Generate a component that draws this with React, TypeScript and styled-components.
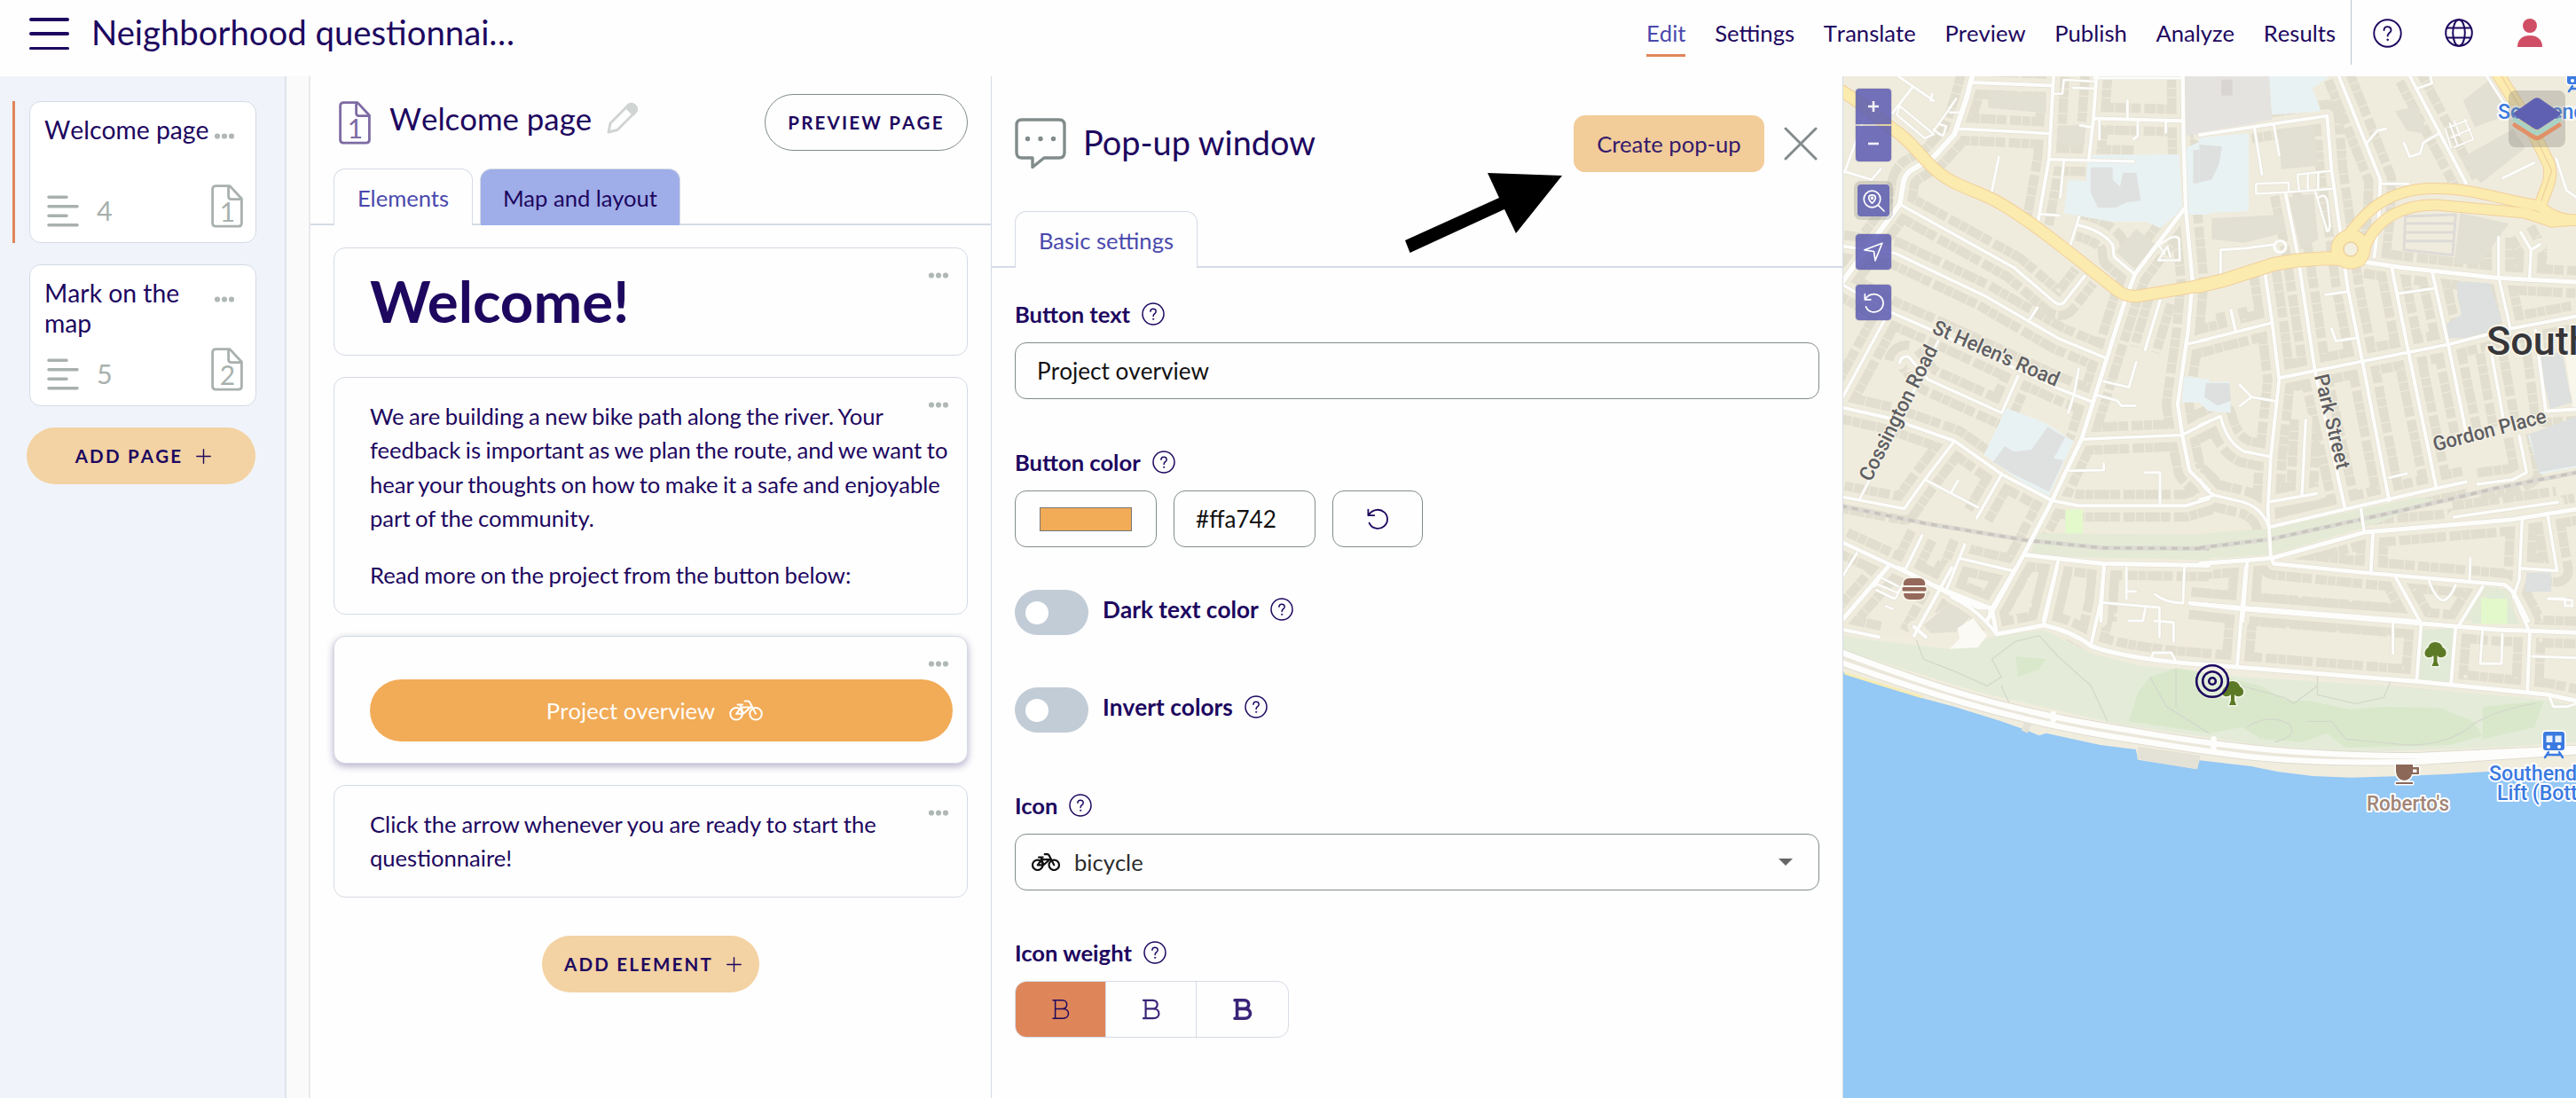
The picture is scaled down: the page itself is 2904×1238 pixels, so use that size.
import React from "react";
import styled, { createGlobalStyle, css } from "styled-components";

const ink = "#1d075f";
const line = "#d5dbe5";
const grey = "#a9b1ae";
const sand = "#f3d2a3";

const Global = createGlobalStyle`
  * { box-sizing: border-box; }
  body { margin: 0; background: #fefefe; color: ${ink}; font-family: Lato, "Liberation Sans", sans-serif; font-size: 25.6px; }
  svg { display: block; flex: none; }
`;

/* ---------- page frame ---------- */

const Page = styled.div`
  width: 2904px;
  height: 1238px;
  overflow: hidden;
  display: flex;
  flex-direction: column;
`;
const Header = styled.header`
  height: 86px;
  flex: none;
  display: flex;
  align-items: flex-start;
  background: #fefefe;
`;
const Burger = styled.div`
  width: 45px;
  height: 36px;
  margin: 20px 0 0 33px;
  display: flex;
  flex-direction: column;
  justify-content: space-between;
  i { height: 3.5px; border-radius: 2px; background: ${ink}; }
`;
const Title = styled.h1`
  margin: 12px 0 0 25px;
  width: 500px;
  font-size: 38.3px;
  line-height: 48px;
  font-weight: 400;
  white-space: nowrap;
`;
const Nav = styled.nav`
  margin-left: auto;
  height: 73px;
  padding-right: 17px;
  border-right: 1px solid #b9c9d3;
  display: flex;
  gap: 32.7px;
  font-kerning: none;
`;
const NavItem = styled.a<{ $active?: boolean }>`
  height: 64px;
  padding-top: 21px;
  line-height: 32px;
  color: ${(p) => (p.$active ? "#4a49ad" : ink)};
  border-bottom: 3px solid ${(p) => (p.$active ? "#e08559" : "transparent")};
`;
const HeaderIcons = styled.div`
  width: 253px;
  height: 74px;
  padding-left: 24px;
  display: flex;
  align-items: center;
  gap: 48px;
`;
const Body = styled.div`
  flex: 1;
  display: flex;
  min-height: 0;
`;

/* ---------- sidebar ---------- */

const Sidebar = styled.aside`
  width: 323px;
  flex: none;
  padding: 28px 33px 0 14px;
  border-right: 2px solid #e0e4ea;
  background: #f0f4fa;
  display: flex;
  flex-direction: column;
  gap: 24px;
`;
const PageSlot = styled.div<{ $current?: boolean }>`
  height: 160px;
  padding-left: 16px;
  border-left: 3px solid ${(p) => (p.$current ? "#e08559" : "transparent")};
`;
const PageCard = styled.div`
  width: 256px;
  height: 160px;
  padding: 14px 14px 16px 16px;
  border: 1.5px solid ${line};
  border-radius: 13px;
  background: #fff;
  display: flex;
  flex-direction: column;
  justify-content: space-between;
`;
const PageTop = styled.div`
  display: flex;
  justify-content: space-between;
  padding-right: 9px;
  font-size: 28.3px;
  font-kerning: none;
  line-height: 34px;
  svg { margin-top: 21px; }
`;
const PageName = styled.div<{ $wrap?: boolean }>`
  width: ${(p) => (p.$wrap ? "168px" : "190px")};
  white-space: ${(p) => (p.$wrap ? "normal" : "nowrap")};
`;
const PageBottom = styled.div`
  display: flex;
  align-items: center;
  height: 49px;
  padding-left: 3px;
  color: ${grey};
  font-size: 30.5px;
  span { margin: 8px auto 0 20px; line-height: 36px; }
  & > svg:first-child { margin-top: 10px; }
`;
const pill = css`
  height: 64px;
  border-radius: 32px;
  background: ${sand};
  display: flex;
  align-items: center;
  justify-content: center;
  font-size: 20.5px;
  font-weight: 700;
  letter-spacing: 2.2px;
  font-kerning: none;
  white-space: nowrap;
`;
const AddPage = styled.button`
  ${pill}
  width: 258px;
  margin-left: 16px;
  border: 0;
  padding: 0 0 0 5px;
  gap: 15px;
  color: ${ink};
  font-family: inherit;
`;
const Gutter = styled.div`
  width: 27px;
  flex: none;
  background: #fafafa;
  border-right: 2px solid #e8e9ed;
`;

/* ---------- element column ---------- */

const Editor = styled.section`
  width: 767px;
  flex: none;
  background: #fefefe;
`;
const EditorHead = styled.div`
  height: 104px;
  padding: 20px 26px 20px 32px;
  display: flex;
  align-items: center;
`;
const EditorTitle = styled.h2`
  margin: 0 17px 8px 21px;
  font-size: 34.8px;
  line-height: 44px;
  font-weight: 400;
  font-kerning: none;
  white-space: nowrap;
`;
const PreviewButton = styled.button`
  ${pill}
  width: 229px;
  margin-left: auto;
  padding: 0;
  border: 1.5px solid #828b8b;
  background: transparent;
  color: ${ink};
  font-family: inherit;
`;
const TabRow = styled.div`
  height: 64px;
  padding-left: 26px;
  display: flex;
  gap: 8px;
  box-shadow: inset 0 -2px 0 ${line};
`;
const Tab = styled.div<{ $active?: boolean; $w: number }>`
  width: ${(p) => p.$w}px;
  height: 64px;
  border: 1.5px solid ${line};
  border-bottom: 0;
  border-radius: 13px 13px 0 0;
  background: ${(p) => (p.$active ? "#fefefe" : "#9fade8")};
  color: ${(p) => (p.$active ? "#4a49ad" : ink)};
  display: flex;
  align-items: center;
  justify-content: center;
  white-space: nowrap;
`;
const Cards = styled.div`
  padding: 25px 26px 0;
  display: flex;
  flex-direction: column;
  gap: 24px;
`;
const Card = styled.article<{ $h: number; $selected?: boolean }>`
  position: relative;
  width: 715px;
  height: ${(p) => p.$h}px;
  padding: 24px 15px 0 40px;
  border: 1.5px solid ${line};
  border-radius: 13px;
  background: #fefefe;
  line-height: 38.4px;
  box-shadow: ${(p) => (p.$selected ? "0 3px 8px rgba(29,7,95,.32)" : "none")};
`;
const Copy = styled.p<{ $tight?: number }>`
  margin: 0 0 25.6px;
  white-space: nowrap;
  word-spacing: ${(p) => -(p.$tight ?? 1)}px;
`;
const CardMenu = styled.div`
  position: absolute;
  right: 20px;
  top: 27px;
`;
const Heading = styled.div`
  margin-top: -3px;
  font-size: 65.4px;
  line-height: 76px;
  font-weight: 700;
`;
const ProjectButton = styled.div`
  width: 657px;
  height: 70px;
  margin-top: 24px;
  border-radius: 35px;
  background: #f2ab57;
  color: #fffdf9;
  font-kerning: none;
  display: flex;
  align-items: center;
  justify-content: center;
  gap: 16px;
  padding-right: 15px;
`;
const AddElement = styled.button`
  ${pill}
  width: 245px;
  margin: 43px auto 0;
  border: 0;
  padding: 0 0 0 5px;
  gap: 15px;
  color: ${ink};
  font-family: inherit;
`;

/* ---------- settings column ---------- */

const Settings = styled.section`
  width: 961px;
  flex: none;
  border-left: 1.5px solid ${line};
  border-right: 1.5px solid ${line};
  background: #fefefe;
`;
const SettingsHead = styled.div`
  height: 152px;
  padding: 44px 28px 44px 26px;
  display: flex;
  align-items: center;
  h2 { margin: 0 auto 2px 19px; font-size: 37.9px; line-height: 48px; font-weight: 400; }
`;
const CreateButton = styled.div`
  width: 215px;
  height: 64px;
  margin-right: 22px;
  border-radius: 13px;
  background: #f2cc99;
  display: flex;
  align-items: center;
  justify-content: center;
  padding-bottom: 1px;
  color: #341a6b;
`;
const Form = styled.div`
  padding: 0 26px;
`;
const Label = styled.div<{ $top?: number }>`
  height: 32px;
  margin: ${(p) => p.$top ?? 0}px 0 16px;
  display: flex;
  align-items: center;
  gap: 13px;
  font-weight: 700;
  white-space: nowrap;
`;
const Box = styled.div<{ $w: number; $pad?: number }>`
  width: ${(p) => p.$w}px;
  height: 64px;
  padding: 0 ${(p) => p.$pad ?? 24}px;
  border: 1.5px solid #828b8b;
  border-radius: 13px;
  display: flex;
  align-items: center;
  color: #111;
  font-size: 26.1px;
  font-kerning: none;
`;
const ColorRow = styled.div`
  display: flex;
  gap: 19px;
`;
const Swatch = styled.div`
  width: 104px;
  height: 27px;
  background: #f2ab57;
  border: 1.5px solid #767676;
`;
const ToggleRow = styled.div<{ $top: number }>`
  height: 51px;
  margin-top: ${(p) => p.$top}px;
  display: flex;
  align-items: center;
  gap: 16px;
`;
const ToggleLabel = styled(Label)`
  margin: 0 0 7px;
  font-size: 26.2px;
  font-kerning: none;
`;
const Toggle = styled.div`
  width: 83px;
  height: 51px;
  padding-left: 12px;
  border-radius: 26px;
  background: #c2ccd7;
  display: flex;
  align-items: center;
  i { width: 26px; height: 26px; border-radius: 50%; background: #fff; }
`;
const OptionName = styled.span`
  margin-left: 16px;
  color: #2c2c2c;
  font-size: 25.6px;
`;
const Caret = styled.i`
  margin: 0 11px 0 auto;
  border: 8px solid transparent;
  border-top-color: #666;
  border-bottom: 0;
`;
const Weights = styled.div`
  width: 309px;
  height: 64px;
  border: 1.5px solid ${line};
  border-radius: 13px;
  overflow: hidden;
  display: grid;
  grid-template-columns: 102px 102px 1fr;
`;
const Weight = styled.div<{ $on?: boolean }>`
  display: flex;
  align-items: center;
  justify-content: center;
  border-right: 1px solid ${line};
  background: ${(p) => (p.$on ? "#de865a" : "transparent")};
  &:last-child { border-right: 0; }
`;

/* ---------- map ---------- */

const MapPane = styled.section`
  position: relative;
  flex: 1;
  overflow: hidden;
  background: #f0ecdd;
`;
const MapTools = styled.div`
  position: absolute;
  left: 14px;
  top: 14px;
  display: flex;
  flex-direction: column;
`;
const tool = css`
  width: 40px;
  display: flex;
  align-items: center;
  justify-content: center;
  background: rgba(88, 88, 176, 0.84);
  box-shadow: 0 0 0 1px rgba(60, 60, 100, 0.15);
`;
const Tool = styled.div<{ $gap?: number; $r?: string }>`
  ${tool}
  height: 40px;
  margin-bottom: ${(p) => p.$gap ?? 2}px;
  border-radius: ${(p) => p.$r ?? "4px"};
`;
const SearchTool = styled.div`
  ${tool}
  width: 36px;
  height: 36px;
  margin: 0 2px 20px;
  border-radius: 4px;
  background: #6f6fb6;
  box-shadow: 0 0 0 4px rgba(120, 120, 120, 0.25);
`;
const LayersButton = styled.div`
  position: absolute;
  right: 12px;
  top: 16px;
  width: 64px;
  height: 64px;
  border-radius: 8px;
  background: rgba(130, 130, 120, 0.33);
  display: flex;
  align-items: center;
  justify-content: center;
`;
const Arrow = styled.svg`
  position: absolute;
  left: 1580px;
  top: 190px;
  pointer-events: none;
`;

/* ---------- icons ---------- */

const Dots = () => (
  <svg width="24" height="7" viewBox="0 0 24 7" fill="#b0b8b5">
    <circle cx="4" cy="3.5" r="3.1" />
    <circle cx="12" cy="3.5" r="3.1" />
    <circle cx="20" cy="3.5" r="3.1" />
  </svg>
);

const DocIcon = ({ n, color }: { n: string; color: string }) => (
  <svg width="36" height="49" viewBox="0 0 36 49" fill="none" stroke={color} strokeWidth="2.8" strokeLinejoin="round">
    <path d="M5.5 1.6H21L34.4 16V43.5Q34.4 47.2 30.8 47.2H5.2Q1.6 47.2 1.6 43.5V5.2Q1.6 1.6 5.5 1.6Z" />
    <path d="M19.6 1.6V13.6Q19.6 16.6 22.6 16.6H34.4" />
    <text x="18.5" y="41.5" textAnchor="middle" fontSize="30" fontFamily="Lato" fill={color} stroke="none">{n}</text>
  </svg>
);

const ListIcon = () => (
  <svg width="36" height="36" viewBox="0 0 36 36" stroke={grey} strokeWidth="3.6" strokeLinecap="round">
    <path d="M2 2.2H22M2 12.7H34M2 23.2H22M2 33.7H34" />
  </svg>
);

const Plus = () => (
  <svg width="17" height="17" viewBox="0 0 17 17" stroke={ink} strokeWidth="1.4" strokeLinecap="round">
    <path d="M8.5 .8V16.2M.8 8.5H16.2" />
  </svg>
);

const Help = ({ size = 26 }: { size?: number }) => (
  <svg width={size} height={size} viewBox="0 0 26 26" fill="none" stroke={ink} strokeWidth="1.5" strokeLinecap="round">
    <circle cx="13" cy="13" r="12" />
    <path d="M9.9 10.3C9.9 6.1 16.2 6.2 16.2 10.2C16.2 12.7 13.1 12.7 13.1 15.4" />
    <circle cx="13.1" cy="18.8" r=".7" fill={ink} strokeWidth=".6" />
  </svg>
);

const Bike = ({ w, color, sw }: { w: number; color: string; sw: number }) => (
  <svg width={w} height={(w * 24) / 38} viewBox="0 0 38 24" fill="none" stroke={color} strokeWidth={sw} strokeLinecap="round" strokeLinejoin="round">
    <circle cx="8" cy="15.8" r="6.8" />
    <circle cx="30" cy="15.8" r="6.8" />
    <path d="M17.5 1.4H21.2Q22.6 1.4 23.2 2.8L30 15.8M9.6 5.4H15M12.4 5.6L15.6 14.6M13.4 8.4H25M8 15.8L13.4 8.6M8 15.8H16L24.6 8M14.3 15.8V18.2" />
  </svg>
);

const Undo = ({ size, color, sw }: { size: number; color: string; sw: number }) => (
  <svg width={size} height={size} viewBox="0 0 24 24" fill="none" stroke={color} strokeWidth={sw} strokeLinecap="round" strokeLinejoin="round">
    <path d="M1.4 1.6V8.2H8.2M1.8 8C5 1.6 14 -.4 19.6 4.6C24.4 9 24 16.4 19.4 20.2C14 24.8 5.4 23.4 2.6 16.6" />
  </svg>
);

const BoldIcon = ({ sw, color }: { sw: number; color: string }) => (
  <svg width="22" height="24" viewBox="0 0 22 24" fill="none" stroke={color} strokeWidth={sw} strokeLinecap="round" strokeLinejoin="round">
    <path d="M2 1.8H12.6C19.400 1.8 19.400 11.4 12.6 11.4H4.6M12.6 11.4H13.2C21.600 11.4 21.600 22.2 13.2 22.2H2M4.6 1.8V22.2" />
  </svg>
);

/* ---------- map drawing ---------- */

type Road = [string, number];

const westRoads: Road[] = [
  ["M460 15L440 80L400 180L330 245L250 285Q228 300 225 330L215 380L22 600", 6],
  ["M455 33L730 42", 4],
  ["M735 15L720 250L680 440", 4],
  ["M415 165L718 178", 3.5],
  ["M720 252L1005 258", 3.5],
  ["M880 15L870 135L855 250", 4],
  ["M870 135L1170 142", 4],
  ["M870 20L1172 20", 3],
  ["M1172 15L1175 210L1182 390L1205 600L1190 740L1155 950L1172 1045L1195 1140L1260 1195", 4.5],
  ["M1175 395L1010 580L975 660L915 820L830 1050L730 1225L640 1370L510 1568", 5],
  ["M1010 580L940 530L935 495Q900 455 820 440", 3.5],
  ["M822 415L785 515", 3],
  ["M215 380L600 560L740 660Q762 672 775 655L840 585", 3.5],
  ["M22 500L200 520L500 640L750 762L915 820", 3.5],
  ["M22 610L190 690L340 745L750 905L870 945", 3.5],
  ["M650 715L680 675", 3],
  ["M345 770L200 1020L80 1220", 3],
  ["M215 832Q220 812 245 815L310 880L560 975L615 870", 3.5],
  ["M22 960L180 990L400 1055L560 1150L730 1225L820 1240L1180 1240L1260 1220", 4],
  ["M400 1055L300 1165L230 1248L22 1215", 3.5],
  ["M300 1165L480 1245M390 1200L412 1168", 3],
  ["M560 1150L475 1275", 3.5],
  ["M22 930L170 700", 3.5],
  ["M22 285L120 310L150 280M28 290L110 100", 3],
  ["M210 15L330 85M260 45L190 120M325 65L320 85", 3],
  ["M215 100L330 180L300 192L205 125Z", 2.5],
  ["M330 170L385 105L405 80M345 150L372 158L362 185Q340 178 330 165M385 118H415", 2.5],
  ["M22 1345L240 1430L390 1495L480 1530L530 1530", 4.5],
  ["M640 1380L900 1405L1260 1410", 5],
  ["M290 1325L235 1420M435 1350L375 1475M420 1390L595 1425", 3.5],
  ["M750 1400L700 1568M905 1410L895 1568", 4],
  ["M830 1050L1170 1038L1260 1000", 3.5],
  ["M790 1140L905 1138V1120M1045 1145H1095V1240", 3],
  ["M885 925L950 940L965 955H1010M905 885L990 902L1015 830", 3],
  ["M820 850L805 920L785 975", 3],
  ["M1095 655L1045 795M1190 778L1260 765", 3.5],
  ["M550 245L525 350M770 255L758 360M685 408L755 412", 3],
  ["M985 85V135M1020 145V185L1005 195M890 140V195M1115 145V175M825 155L860 160", 3],
  ["M735 65H765L770 25L870 30M800 48L870 50", 2.5],
  ["M1095 495Q1150 460 1160 480L1162 540H1090L1120 500L1130 530M1085 490L1110 520", 2.5],
  ["M22 1440L70 1375M22 1560L175 1410L235 1420", 3],
  ["M140 1440L210 1470M135 1480L200 1505L215 1480M130 1470L165 1425", 2.5],
];

const eastRoads: Road[] = [
  ["M0 182L430 128L445 280L475 460L500 620L550 830L640 1225", 4],
  ["M185 165L210 295M250 155L268 240", 3],
  ["M190 322L300 318V345L190 350Z", 2.5],
  ["M330 295L440 285M330 295L335 338M365 292V336M400 290V336M300 345L455 336", 2.5],
  ["M290 350L330 520L390 860L490 1245", 4],
  ["M390 345L430 455M400 362Q425 345 432 375L440 440Q438 462 428 455", 2.5],
  ["M470 15L610 310L605 420L590 530", 4],
  ["M610 322H705M565 205L600 170L630 165", 3],
  ["M710 15L900 320", 4],
  ["M690 205L710 245L745 235L755 205L805 180M735 50L785 35L780 15", 3],
  ["M850 220L830 165M870 210L845 150M880 185L860 142M925 195L895 138M845 160L905 140M850 190L915 165M860 218L925 195", 2],
  ["M970 15L1050 120M1025 305L1130 262M1205 250L1240 340L1272 360", 3],
  ["M220 575L245 720L268 880L240 1100L230 1250L240 1390", 4],
  ["M0 770L245 718M105 682L120 740", 3.5],
  ["M270 875L550 828L840 780L1050 735L1272 700", 4],
  ["M650 565L705 800L800 1190M785 570L840 780L900 1030", 4],
  ["M560 545L680 560L1000 590L1272 602", 5],
  ["M1010 475V585L1050 735M1085 460L1120 510L1115 590M1150 495L1120 510", 3.5],
  ["M985 800L1030 1010M1080 1040L1105 1145L1060 1165L940 1178", 3.5],
  ["M1135 740L1170 970L1272 965", 4],
  ["M670 635L790 620M425 638L495 630M445 735L460 770L525 762", 3],
  ["M0 1010L70 985Q90 1060 150 1085L240 1100", 3.5],
  ["M135 895L175 930L135 955M175 930L260 942", 3],
  ["M358 995L345 1210M240 1228L395 1205", 3.5],
  ["M0 1165Q20 1200 50 1210L150 1230Q215 1250 232 1300M0 1222L50 1210", 3.5],
  ["M240 1300L490 1250L800 1190L900 1172", 4],
  ["M0 1405L240 1390L560 1315L1050 1280L1272 1250", 5],
  ["M545 1250L555 1310M860 1272L1210 1230", 3.5],
  ["M240 1385L250 1405L550 1430L1030 1465Q1060 1480 1075 1510L1110 1568", 4.5],
  ["M585 1320L578 1430M160 1400L145 1568M0 1520L520 1555L730 1568", 4],
  ["M1090 1280L1080 1450L1060 1500M1175 1260L1208 1425L1085 1418", 3.5],
  ["M775 1455Q800 1510 825 1510Q850 1500 865 1465M915 1390L912 1450M640 1160L700 1148", 3],
  ["M70 585V510L160 505L250 495", 3],
  ["M1180 1505H1235V1525H1260", 3],
];

const southRoads: Road[] = [
  ["M15 175L110 0M15 210L90 235", 4],
  ["M130 0L220 70L330 140L340 225L440 195Q500 215 540 265C600 300 700 320 800 330L1230 385L1510 430L1568 450", 5],
  ["M380 0L325 150M245 0L165 230M245 100Q300 140 340 225M165 200L190 235", 4],
  ["M468 0L440 195M568 0L560 120L540 260", 4],
  ["M560 118L685 135V235M655 140L650 180H620M675 180L715 185V250", 3],
  ["M615 0V105M615 80H635M738 0L735 120Q700 120 675 90", 3],
  ["M868 0L860 140L850 330", 4],
  ["M750 120L860 140L1235 188L1400 210L1568 220", 5],
  ["M1185 30L1240 190L1230 385M1313 200L1303 395", 4],
  ["M1370 65L1320 195M1435 90L1470 220L1465 415", 4],
  ["M1180 190V290M1370 210L1365 325H1410L1412 225M1475 300L1568 305", 3],
  ["M85 55L130 85L140 60M85 75L120 105M105 130L120 140", 2.5],
  ["M668 305L672 288H710L718 310", 3],
  ["M1510 430L1520 470H1550L1568 460", 3],
  ["M1508 105L1560 110V130", 3],
];

const tiles: { t: string; roads: Road[] }[] = [
  { t: "translate(2070 80) scale(.33333 .3954)", roads: westRoads },
  { t: "translate(2480 80) scale(.33333 .3954)", roads: eastRoads },
  { t: "translate(2070 640) scale(.5319 .33333)", roads: southRoads },
];
const [west, east, south] = tiles.map((x) => x.t);

const yellow: { t: string; d: string; w: number }[] = [
  { t: west, d: "M15 55C100 100 130 125 190 165C250 195 290 250 340 285C400 330 480 340 560 380C680 440 820 540 950 625Q980 645 1020 642L1262 608", w: 12.5 },
  { t: east, d: "M-5 614L80 597L250 551L330 540L430 534L540 538", w: 14 },
  { t: east, d: "M500 470C560 400 640 332 800 335C920 335 1010 365 1150 385Q1200 425 1275 425", w: 11 },
  { t: east, d: "M555 510C590 425 680 380 800 382L1100 405L1190 430L1275 425", w: 11 },
  { t: east, d: "M1010 12L1110 145L1180 265Q1190 300 1175 330L1150 385", w: 13 },
];

const ns = { vectorEffect: "non-scaling-stroke" as const };

const Tree = ({ x, y }: { x: number; y: number }) => (
  <g transform={`translate(${x} ${y})`} fill="#5c7a26" stroke="#f4f6ea" strokeWidth="3" paintOrder="stroke">
    <path d="M0 -14C5 -14 8 -10 8 -8C13 -6 14 2 8 3Q4 4 2 1V8L4 13H-4L-2 8V1Q-5 4 -9 3C-14 1 -12 -6 -8 -8C-7 -12 -4 -14 0 -14Z" />
  </g>
);

const Train = ({ x, y }: { x: number; y: number }) => (
  <g transform={`translate(${x} ${y})`}>
    <rect x="0" y="0" width="24" height="21" rx="3" fill="#3b7ae0" stroke="#fff" strokeWidth="3" paintOrder="stroke" />
    <path d="M6 23L2 29M18 23L22 29M4 26H20" stroke="#3b7ae0" strokeWidth="2.4" />
    <path d="M3.5 4.5H10.5V12H3.5ZM13.5 4.5H20.5V12H13.5Z" fill="#e8f1fb" />
    <circle cx="6" cy="17" r="2" fill="#fff" />
    <circle cx="18" cy="17" r="2" fill="#fff" />
  </g>
);

const CityMap = () => (
  <svg width="826" height="1152" viewBox="2078 86 826 1152" fill="none" strokeLinecap="round" strokeLinejoin="round">
    <rect x="2078" y="86" width="826" height="1152" fill="#f0ecdd" />

    {/* rows of houses on both sides of each street */}
    {tiles.map(({ t, roads }) => (
      <g key={t} transform={t} strokeLinecap="butt">
        {roads.map(([d, w], i) => w >= 3.5 && <path key={i} d={d} {...ns} stroke="#e1decf" strokeWidth={36} strokeDasharray="13 1 9 1 17 1 11 4" />)}
      </g>
    ))}
    {tiles.map(({ t, roads }) => (
      <g key={t} transform={t}>
        {roads.map(([d, w], i) => w >= 3.5 && <path key={i} d={d} {...ns} stroke="#f0ecdd" strokeWidth={15} />)}
      </g>
    ))}

    {/* schools, car parks, big buildings */}
    <g transform={west}>
      <path fill="#e9f2f3" d="M850 240L1160 238L1170 395L1095 448L1050 430H930L770 405L785 310L845 315ZM575 962L700 1000L803 1055L720 1212L640 1180L500 1095ZM1180 220L1262 190V410H1190ZM1175 870L1262 880V945H1170Z" />
      <path fill="#dfe1e0" d="M860 275H935V310L960 330L970 290H1015L1030 370L980 375L945 390H885L860 345ZM715 1015L775 1045L735 1105L770 1110L720 1200L600 1150L530 1115L570 1070L600 1085L660 1080ZM1207 225H1262V320H1207Z" />
      <path fill="#e5e3df" d="M1180 15H1262V175L1180 185Z" />
      <path fill="#e2dfd3" d="M945 515L1015 450L1080 495L1010 565ZM750 155H840V210L800 222L750 205ZM510 55L710 65V120L515 105Z" />
      <rect x="775" y="1250" width="60" height="70" fill="#e3f8cb" />
      <path fill="#e4ead6" d="M685 1318L1262 1322V1395L655 1382Z" />
    </g>
    <g transform={east}>
      <path fill="#e5e3df" d="M-2 15H235L243 140L-2 176Z" />
      <path fill="#d8d5d2" d="M72 25H110V70H72Z" />
      <path fill="#e9f2f3" d="M235 15H440L380 50L410 115L243 125ZM-2 190L165 178V400L-2 405ZM-2 890L100 885L105 975L30 970L-2 945ZM1110 1040L1150 1150L1272 1130V990Z" />
      <path fill="#dde0df" d="M-2 210L75 215L65 265L40 310L-2 318ZM20 890L100 890L105 940L60 955L15 930ZM870 600L980 605L1020 710L970 760L835 762V720L885 695L870 640ZM1145 815L1225 800L1257 945L1185 965ZM1115 1035L1274 985V1125L1145 1145ZM1105 1430H1188V1485H1100Z" />
      <path fill="#e2dfd3" d="M265 165L385 155L400 270L275 280ZM300 360L385 350L400 480L340 510ZM40 420L280 410L290 460L150 490L40 480ZM880 405L1045 435L945 550H860ZM890 85L980 25L1060 120L930 160ZM880 250L1060 165L1100 220L950 320ZM660 115L735 100L770 180L700 170Z" />
      <path fill="#f9f6ec" d="M1235 810H1274V960H1262Z" />
      <path d="M695 415L865 410L855 525L690 510ZM700 435H860M700 460H858M695 485H855" {...ns} stroke="#dddbd6" strokeWidth="3" />
      <path fill="#e4ead6" d="M-2 1320L240 1305L740 1215L790 1222L600 1290L240 1380L-2 1390Z" />
      <path fill="#e4ead6" d="M960 1470L1050 1480L1070 1568H890Z" />
      <path fill="#e3f8cb" d="M957 1502L1040 1508L1035 1568H952Z" />
    </g>

    {/* coast */}
    <g transform={south}>
      <path fill="#f4efe0" d="M190 180L240 120L285 170L260 215L240 265Z" />
      <path fill="#e2dfd3" d="M185 195L240 120L285 165L255 215L262 240L235 265Z" />
      <path fill="#e1ead7" d="M1242 210L1310 205L1300 390H1235ZM1345 190L1400 60L1450 190Z" />
      <rect x="1367" y="105" width="55" height="85" fill="#e3f8cb" />
      <path fill="#f1edde" d="M15 235L440 205L540 290L800 345L1568 460V700L1100 740L500 620L15 370Z" />
      <path fill="#e4ecd9" d="M15 230L100 250L240 275L330 235L440 210L540 290L640 330L860 370L1120 395L1350 425L1520 450L1568 470V590L1380 610L1100 625L900 600L600 530L300 420L15 280Z" />
      <path fill="#fbfaf4" d="M290 170L320 230L300 270L240 275L262 240L257 205Z" />
      <path fill="#d9e8cb" d="M380 300L445 310L430 345L385 370ZM665 370L720 340L800 360L900 400L955 450L1000 450L1090 480L1160 470L1280 475L1350 520L1370 570L1300 600L1080 610L1040 560L990 590L900 580L860 540L790 560L620 520L640 420ZM1370 470L1500 450L1480 540L1370 580Z" />
      <path d="M170 245L185 310L250 350L320 400L350 370L330 310L380 250L430 230L470 300L540 400L575 520M665 370L700 470L790 560M860 400L950 440L970 460L1020 400M1020 365V430L1100 460L1160 440L1175 385M870 540Q920 490 960 530Q980 570 930 590M1000 520L1050 520L1080 580L1210 600Q1300 600 1350 530Q1400 480 1480 460M350 400L370 470M720 345V470" {...ns} stroke="#d3d8cb" strokeWidth="1.3" />
      <path fill="#94c8f5" d="M15 355L75 385L130 415L190 445L250 470L350 520L395 545L430 568L445 560L560 600L635 615L640 650L765 682L770 652L880 672L935 690L1010 705L1090 710L1200 705L1300 698L1380 690L1568 686V1800H15Z" />
      <path fill="#e4e1d6" d="M640 605L772 635L765 682L638 648ZM400 520L415 530L405 560L392 550Z" />
      <path d="M20 358L100 398L180 437" {...ns} stroke="#f7ecb4" strokeWidth="3" />
      <path d="M5 283C200 400 350 480 600 545C800 600 950 635 1230 637L1568 612M5 318C200 430 400 530 640 585C850 640 950 665 1230 657L1568 622" {...ns} stroke="#dfdcd0" strokeWidth="8.5" />
      <path d="M5 300C200 415 375 505 620 565C825 620 950 650 1230 647" {...ns} stroke="#ebe7db" strokeWidth="6" />
      <path d="M5 283C200 400 350 480 600 545C800 600 950 635 1230 637L1568 612M5 318C200 430 400 530 640 585C850 640 950 665 1230 657L1568 622M460 495V515M800 580V610" {...ns} stroke="#fdfdfb" strokeWidth="6.5" />
    </g>

    {/* railway */}
    {[[west, "M15 1240L300 1290L640 1338L900 1360L1262 1362"], [east, "M-2 1360L240 1335L700 1250L1000 1190L1274 1145"]].map(([t, d]) => (
      <g key={t} transform={t} strokeLinecap="butt">
        <path d={d} {...ns} stroke="#dcdad2" strokeWidth="5" />
        <path d={d} {...ns} stroke="#c8c5bf" strokeWidth="3.4" strokeDasharray="7 6" />
      </g>
    ))}

    {/* streets */}
    {tiles.map(({ t, roads }) => (
      <g key={t} transform={t}>
        {roads.map(([d, w], i) => <path key={i} d={d} {...ns} stroke="#e2dfd4" strokeWidth={w + 1.2} />)}
      </g>
    ))}
    {tiles.map(({ t, roads }) => (
      <g key={t} transform={t}>
        {roads.map(([d, w], i) => <path key={i} d={d} {...ns} stroke="#fdfdfb" strokeWidth={w} />)}
      </g>
    ))}
    <circle cx="2570.5" cy="278" r="6.5" stroke="#fdfdfb" strokeWidth="3" />
    {yellow.map((y, i) => <g key={i} transform={y.t}><path d={y.d} {...ns} stroke="#f0cf9c" strokeWidth={y.w + 2} /></g>)}
    <circle cx="2650" cy="281" r="15" stroke="#f0cf9c" strokeWidth="15" />
    {yellow.map((y, i) => <g key={i} transform={y.t}><path d={y.d} {...ns} stroke="#fcebae" strokeWidth={y.w} /></g>)}
    <circle cx="2650" cy="281" r="15" stroke="#fcebae" strokeWidth="13" />
    <circle cx="2650" cy="281" r="8" fill="#f4f0e0" stroke="#f0cf9c" strokeWidth="1.4" />
    <g transform={east}>
      <path d="M1020 15L1115 150L1190 285L1155 370" {...ns} stroke="#f0cf9c" strokeWidth="1.2" />
    </g>

    {/* street names */}
    <g fontFamily="Roboto, sans-serif" fontSize="23" fontWeight="500" fill="#5e5e62" stroke="#f6f3e8" strokeWidth="3" paintOrder="stroke" strokeOpacity=".8">
      <text transform="translate(2177 375) rotate(23.5)" textLength="153" lengthAdjust="spacingAndGlyphs">St Helen's Road</text>
      <text transform="translate(2109 544) rotate(-63.2)" textLength="168" lengthAdjust="spacingAndGlyphs">Cossington Road</text>
      <text transform="translate(2609 424) rotate(76.5)" textLength="109" lengthAdjust="spacingAndGlyphs">Park Street</text>
      <text transform="translate(2745 509) rotate(-14.6)" textLength="131" lengthAdjust="spacingAndGlyphs">Gordon Place</text>
    </g>
    <text x="2803" y="399.5" fontFamily="Roboto, sans-serif" fontSize="45" fontWeight="500" fill="#36363a" stroke="#f6f3e8" strokeWidth="4" paintOrder="stroke">South</text>

    {/* places */}
    <g fontFamily="Roboto, sans-serif" fontSize="23" fontWeight="500" stroke="#fff" strokeWidth="4" paintOrder="stroke">
      <text x="2816" y="134" fill="#3b7ae0">Southend</text>
      <text x="2806" y="880" fill="#3b7ae0" textLength="99" lengthAdjust="spacingAndGlyphs">Southend</text>
      <text x="2815" y="902" fill="#3b7ae0">Lift (Bott</text>
      <text x="2668" y="914" fill="#a18577" textLength="93" lengthAdjust="spacingAndGlyphs">Roberto's</text>
    </g>
    <Train x={2894} y={74} />
    <Train x={2867} y={825} />
    <g fill="#94695c" stroke="#f8f4ea" strokeWidth="3" paintOrder="stroke">
      <path d="M2146 660Q2145 652 2153 652H2163Q2171 652 2170 660Z" />
      <rect x="2144.500" y="662" width="27" height="4.500" rx="1.500" />
      <path d="M2146 669H2170Q2170 676 2163 676H2153Q2146 676 2146 669Z" />
    </g>
    <g fill="#8b6858" stroke="#fff" strokeWidth="3" paintOrder="stroke">
      <path d="M2701 862H2720V865H2727V873H2719Q2717 880 2710 880Q2702 879 2701 870ZM2701 882H2720V884H2701Z" />
      <path d="M2720 867.500H2724.500V871H2720Z" fill="#fff" strokeWidth="0" />
    </g>
    <Tree x={2745.5} y={738} />
    <Tree x={2517} y={782} />
    <g stroke={ink} strokeWidth="2.6">
      <circle cx="2494" cy="768" r="17.800" fill="rgba(255,255,255,.25)" />
      <circle cx="2494" cy="768" r="10.800" />
      <circle cx="2494" cy="768" r="3.800" />
    </g>
  </svg>
);

export default function App() {
  return (
    <Page>
      <Global />
      <Header>
        <Burger><i /><i /><i /></Burger>
        <Title>Neighborhood questionnai…</Title>
        <Nav>
          <NavItem $active>Edit</NavItem>
          {["Settings", "Translate", "Preview", "Publish", "Analyze", "Results"].map((n) => <NavItem key={n}>{n}</NavItem>)}
        </Nav>
        <HeaderIcons>
          <Help size={33} />
          <svg width="32" height="32" viewBox="0 0 32 32" fill="none" stroke={ink} strokeWidth="2">
            <circle cx="16" cy="16" r="14.800" />
            <ellipse cx="16" cy="16" rx="6.800" ry="14.800" />
            <path d="M2.500 10.500H29.500M2.500 21.500H29.500" />
          </svg>
          <svg width="32" height="32" viewBox="0 0 32 32" fill="#d04e65">
            <circle cx="16" cy="8" r="8" />
            <path d="M2 32C2 23 8 19 16 19S30 23 30 32Z" />
          </svg>
        </HeaderIcons>
      </Header>
      <Body>
        <Sidebar>
          <PageSlot $current>
            <PageCard>
              <PageTop><PageName>Welcome page</PageName><Dots /></PageTop>
              <PageBottom><ListIcon /><span>4</span><DocIcon n="1" color={grey} /></PageBottom>
            </PageCard>
          </PageSlot>
          <PageSlot>
            <PageCard>
              <PageTop><PageName $wrap>Mark on the map</PageName><Dots /></PageTop>
              <PageBottom><ListIcon /><span>5</span><DocIcon n="2" color={grey} /></PageBottom>
            </PageCard>
          </PageSlot>
          <AddPage>ADD PAGE <Plus /></AddPage>
        </Sidebar>
        <Gutter />
        <Editor>
          <EditorHead>
            <DocIcon n="1" color="#7d6ba3" />
            <EditorTitle>Welcome page</EditorTitle>
            <svg width="36" height="46" viewBox="0 0 36 46" fill="none" stroke="#d0d4d3" strokeWidth="3" strokeLinejoin="round">
              <path d="M4 24L24.500 3.500Q28 .8 31.500 4Q35 7.600 32.500 11L12 31.500L2 34Z" />
              <path d="M22 6L30 14L32.500 11Q35 7.600 31.500 4Q28 .8 24.500 3.500Z" fill="#d0d4d3" />
            </svg>
            <PreviewButton>PREVIEW PAGE</PreviewButton>
          </EditorHead>
          <TabRow>
            <Tab $active $w={157}>Elements</Tab>
            <Tab $w={226}>Map and layout</Tab>
          </TabRow>
          <Cards>
            <Card $h={122}><CardMenu><Dots /></CardMenu><Heading>Welcome!</Heading></Card>
            <Card $h={268}>
              <CardMenu><Dots /></CardMenu>
              <Copy>We are building a new bike path along the river. Your<br />feedback is important as we plan the route, and we want to<br />hear your thoughts on how to make it a safe and enjoyable<br />part of the community.</Copy>
              <Copy>Read more on the project from the button below:</Copy>
            </Card>
            <Card $h={144} $selected>
              <CardMenu><Dots /></CardMenu>
              <ProjectButton>Project overview <Bike w={38} color="#fffdf9" sw={2} /></ProjectButton>
            </Card>
            <Card $h={127}>
              <CardMenu><Dots /></CardMenu>
              <Copy $tight={0.5}>Click the arrow whenever you are ready to start the<br />questionnaire!</Copy>
            </Card>
          </Cards>
          <AddElement>ADD ELEMENT <Plus /></AddElement>
        </Editor>
        <Settings>
          <SettingsHead>
            <svg width="58" height="58" viewBox="0 0 58 58" fill="none" stroke="#828b8b" strokeWidth="3.400" strokeLinejoin="round">
              <path d="M8 2H50Q56 2 56 8V39Q56 45 50 45H33L20 55.500V45H8Q2 45 2 39V8Q2 2 8 2Z" />
              <g fill="#828b8b" stroke="none"><circle cx="14.500" cy="23.500" r="2.700" /><circle cx="29" cy="23.500" r="2.700" /><circle cx="43.500" cy="23.500" r="2.700" /></g>
            </svg>
            <h2>Pop-up window</h2>
            <CreateButton>Create pop-up</CreateButton>
            <svg width="38" height="38" viewBox="0 0 38 38" stroke="#828b8b" strokeWidth="3" strokeLinecap="round">
              <path d="M2 2L36 36M36 2L2 36" />
            </svg>
          </SettingsHead>
          <TabRow><Tab $active $w={206}>Basic settings</Tab></TabRow>
          <Form>
            <Label $top={36}>Button text <Help /></Label>
            <Box $w={907}>Project overview</Box>
            <Label $top={55}>Button color <Help /></Label>
            <ColorRow>
              <Box $w={160} $pad={27}><Swatch /></Box>
              <Box $w={160}>#ffa742</Box>
              <Box $w={102} $pad={38}><Undo size={24} color={ink} sw={1.8} /></Box>
            </ColorRow>
            <ToggleRow $top={48}><Toggle><i /></Toggle><ToggleLabel>Dark text color <Help /></ToggleLabel></ToggleRow>
            <ToggleRow $top={59}><Toggle><i /></Toggle><ToggleLabel>Invert colors <Help /></ToggleLabel></ToggleRow>
            <Label $top={66}>Icon <Help /></Label>
            <Box $w={907} $pad={18}>
              <Bike w={32} color="#111" sw={2.6} />
              <OptionName>bicycle</OptionName>
              <Caret />
            </Box>
            <Label $top={54}>Icon weight <Help /></Label>
            <Weights>
              <Weight $on><BoldIcon sw={1.5} color={ink} /></Weight>
              <Weight><BoldIcon sw={2.2} color="#3a2478" /></Weight>
              <Weight><BoldIcon sw={3.6} color="#3a2478" /></Weight>
            </Weights>
          </Form>
        </Settings>
        <MapPane>
          <CityMap />
          <MapTools>
            <Tool $r="4px 4px 0 0"><svg width="14" height="14" stroke="#f3f1fa" strokeWidth="2.600"><path d="M7 1V13M1 7H13" /></svg></Tool>
            <Tool $r="0 0 4px 4px" $gap={26}><svg width="14" height="14" stroke="#f3f1fa" strokeWidth="2.600"><path d="M1 7H13" /></svg></Tool>
            <SearchTool>
              <svg width="25" height="25" viewBox="0 0 25 25" fill="none" stroke="#fff" strokeWidth="1.700" strokeLinecap="round" strokeLinejoin="round">
                <circle cx="10.500" cy="10.500" r="9.300" />
                <path d="M17.300 17.300L24 24M10.500 15.200C4.500 9.500 6.500 5.800 10.500 5.800S16.500 9.500 10.500 15.200Z" />
                <circle cx="10.500" cy="9.300" r="1" />
              </svg>
            </SearchTool>
            <Tool $gap={17}>
              <svg width="22" height="22" viewBox="0 0 22 22" fill="none" stroke="#fff" strokeWidth="1.700" strokeLinejoin="round"><path d="M1 8.800L20.800 1.200L13 20.800L11.500 10.500Z" /></svg>
            </Tool>
            <Tool><Undo size={23} color="#fff" sw={1.8} /></Tool>
          </MapTools>
          <LayersButton>
            <svg width="56" height="54" viewBox="0 0 56 54" fill="none" strokeLinejoin="round" strokeLinecap="round">
              <path d="M3 34L25 48Q28 49.500 31 48L53 34" stroke="#e09068" strokeWidth="5" />
              <path d="M3 28L25 42Q28 43.500 31 42L53 28" stroke="#a9d3c4" strokeWidth="5" />
              <path d="M2 20L25 4Q28 2.500 31 4L54 20Q55 22 54 23L31 38Q28 40 25 38L2 23Q1 22 2 20Z" fill="#6060b2" />
            </svg>
          </LayersButton>
        </MapPane>
      </Body>
      <Arrow width="186" height="100" viewBox="1580 190 186 100">
        <path d="M1584 271L1589.500 285L1696 236L1709 263L1761 198L1677 195L1690 223Z" />
      </Arrow>
    </Page>
  );
}
